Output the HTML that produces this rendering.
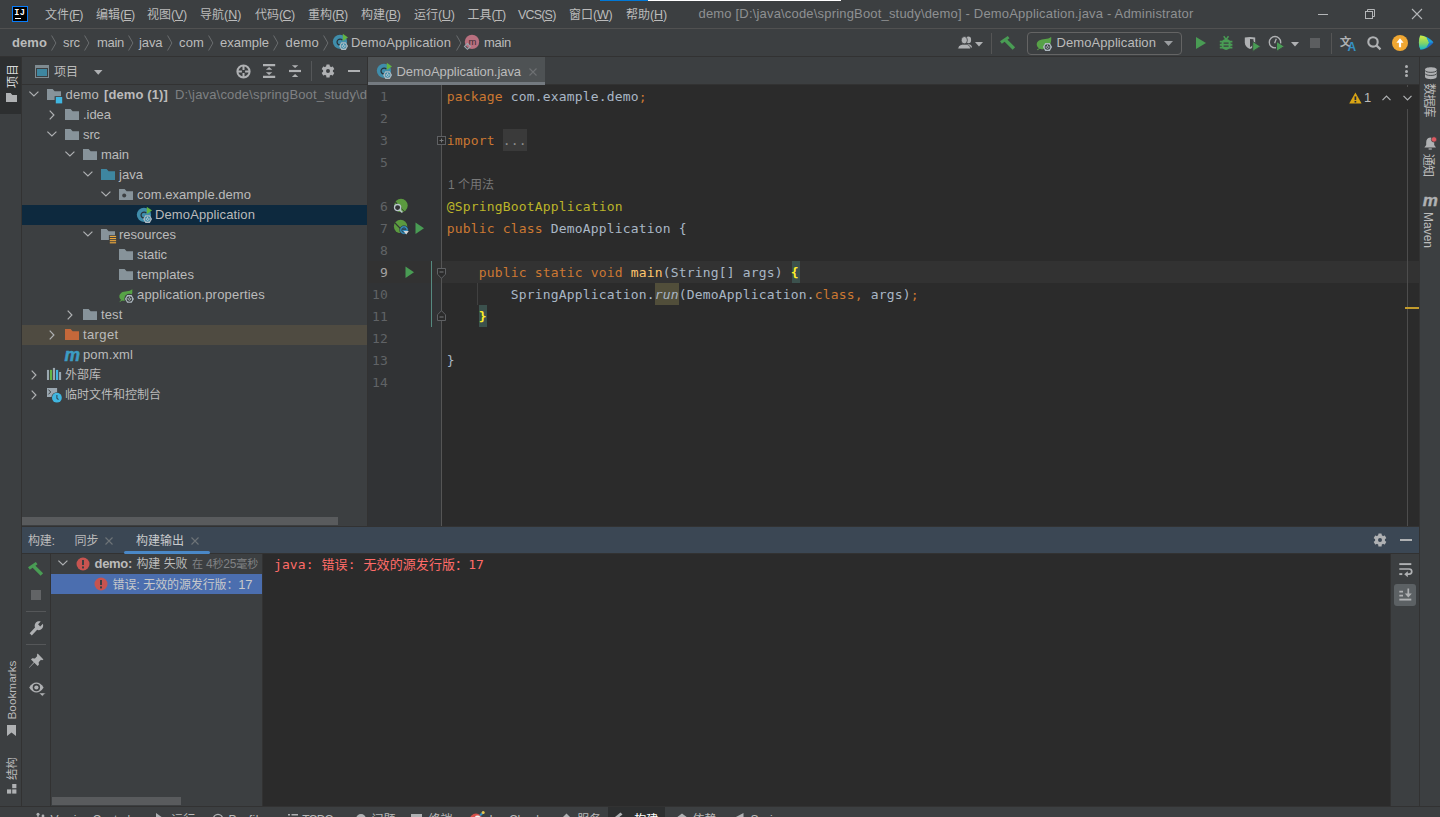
<!DOCTYPE html>
<html lang="zh-CN">
<head>
<meta charset="utf-8">
<title>demo - DemoApplication.java</title>
<style>
html,body{margin:0;padding:0;background:#3c3f41;overflow:hidden}
body{width:1440px;height:817px;position:relative;font-family:"Liberation Sans","Noto Sans CJK SC",sans-serif;font-size:13px;color:#bbbbbb}
.b{position:absolute}
.t{position:absolute;white-space:pre;line-height:20px;height:20px}
.c{font-size:12px}
.c11{font-size:11px}
.m{font-family:"DejaVu Sans Mono","Liberation Mono","Noto Sans CJK SC",monospace;font-size:13px}
.m .c{font-size:13px}
svg{position:absolute;overflow:visible}
u{text-decoration:underline;text-underline-offset:1px}
</style>
</head>
<body>
<div class="b" style="left:600px;top:0px;width:48px;height:1px;background:#0078d7;"></div>
<div class="b" style="left:648px;top:0px;width:193px;height:1px;background:#ffffff;"></div>
<div class="b" style="left:0px;top:28px;width:1440px;height:1px;background:#515151;"></div>
<div class="b" style="left:12px;top:6px;width:14px;height:14px;background:#000;border:1px solid #087cfa"></div>
<span class="t" style="left:14.3px;top:8.7px;font-size:8.6px;line-height:9px;height:9px;font-weight:700;color:#fff;letter-spacing:0.2px;font-family:'Liberation Mono',monospace">IJ</span>
<div class="b" style="left:15px;top:17.8px;width:6px;height:1.3px;background:#fff;"></div>
<span class="t" style="left:45px;top:5.4px;font-size:12.5px;letter-spacing:-0.833px;"><span class="c" style="letter-spacing:0">文件</span>(<u>F</u>)</span>
<span class="t" style="left:96px;top:5.4px;font-size:12.5px;letter-spacing:-0.734px;"><span class="c" style="letter-spacing:0">编辑</span>(<u>E</u>)</span>
<span class="t" style="left:147px;top:5.4px;font-size:12.5px;letter-spacing:-0.234px;"><span class="c" style="letter-spacing:0">视图</span>(<u>V</u>)</span>
<span class="t" style="left:200px;top:5.4px;font-size:12.5px;letter-spacing:0.036px;"><span class="c" style="letter-spacing:0">导航</span>(<u>N</u>)</span>
<span class="t" style="left:255px;top:5.4px;font-size:12.5px;letter-spacing:-0.630px;"><span class="c" style="letter-spacing:0">代码</span>(<u>C</u>)</span>
<span class="t" style="left:308px;top:5.4px;font-size:12.5px;letter-spacing:-0.630px;"><span class="c" style="letter-spacing:0">重构</span>(<u>R</u>)</span>
<span class="t" style="left:361px;top:5.4px;font-size:12.5px;letter-spacing:-0.401px;"><span class="c" style="letter-spacing:0">构建</span>(<u>B</u>)</span>
<span class="t" style="left:414px;top:5.4px;font-size:12.5px;letter-spacing:-0.297px;"><span class="c" style="letter-spacing:0">运行</span>(<u>U</u>)</span>
<span class="t" style="left:467.5px;top:5.4px;font-size:12.5px;letter-spacing:-0.667px;"><span class="c" style="letter-spacing:0">工具</span>(<u>T</u>)</span>
<span class="t" style="left:518px;top:5.4px;font-size:12.5px;letter-spacing:-0.815px;">VCS(<u>S</u>)</span>
<span class="t" style="left:569px;top:5.4px;font-size:12.5px;letter-spacing:-0.224px;"><span class="c" style="letter-spacing:0">窗口</span>(<u>W</u>)</span>
<span class="t" style="left:626px;top:5.4px;font-size:12.5px;letter-spacing:-0.130px;"><span class="c" style="letter-spacing:0">帮助</span>(<u>H</u>)</span>
<span class="t" style="left:698.5px;top:4px;color:#8e9092;letter-spacing:0.181px;">demo [D:\java\code\springBoot_study\demo] - DemoApplication.java - Administrator</span>
<div class="b" style="left:1318px;top:14px;width:10px;height:1px;background:#b4b6b8;"></div>
<div class="b" style="left:1365px;top:11px;width:6px;height:6px;border:1px solid #b4b6b8"></div>
<svg style="left:1365px;top:9px;" width="11" height="11" viewBox="0 0 11 11"><path d="M2.5 2 V0.5 H9.5 V7.5 H8" fill="none" stroke="#b4b6b8" stroke-width="1"/></svg>
<svg style="left:1412px;top:9px;" width="10" height="10" viewBox="0 0 10 10"><path d="M0 0 L10 10 M10 0 L0 10" stroke="#b4b6b8" stroke-width="1.1"/></svg>
<div class="b" style="left:0px;top:56px;width:1440px;height:1px;background:#323232;"></div>
<span class="t" style="left:12px;top:32.7px;font-weight:700;letter-spacing:0.082px;">demo</span>
<span class="t" style="left:63px;top:32.7px;font-weight:400;letter-spacing:-0.115px;">src</span>
<span class="t" style="left:97px;top:32.7px;font-weight:400;letter-spacing:-0.297px;">main</span>
<span class="t" style="left:139px;top:32.7px;font-weight:400;letter-spacing:-0.090px;">java</span>
<span class="t" style="left:179px;top:32.7px;font-weight:400;letter-spacing:0.146px;">com</span>
<span class="t" style="left:220px;top:32.7px;font-weight:400;letter-spacing:-0.020px;">example</span>
<span class="t" style="left:285.5px;top:32.7px;font-weight:400;letter-spacing:0.242px;">demo</span>
<svg style="left:51.0px;top:34.5px;" width="6" height="16" viewBox="0 0 6 16"><path d="M0.6 0.5 L4.9 8 L0.6 15.5" fill="none" stroke="#6a6d6f" stroke-width="1"/></svg>
<svg style="left:84.2px;top:34.5px;" width="6" height="16" viewBox="0 0 6 16"><path d="M0.6 0.5 L4.9 8 L0.6 15.5" fill="none" stroke="#6a6d6f" stroke-width="1"/></svg>
<svg style="left:128.4px;top:34.5px;" width="6" height="16" viewBox="0 0 6 16"><path d="M0.6 0.5 L4.9 8 L0.6 15.5" fill="none" stroke="#6a6d6f" stroke-width="1"/></svg>
<svg style="left:167.20000000000002px;top:34.5px;" width="6" height="16" viewBox="0 0 6 16"><path d="M0.6 0.5 L4.9 8 L0.6 15.5" fill="none" stroke="#6a6d6f" stroke-width="1"/></svg>
<svg style="left:208.20000000000002px;top:34.5px;" width="6" height="16" viewBox="0 0 6 16"><path d="M0.6 0.5 L4.9 8 L0.6 15.5" fill="none" stroke="#6a6d6f" stroke-width="1"/></svg>
<svg style="left:273.2px;top:34.5px;" width="6" height="16" viewBox="0 0 6 16"><path d="M0.6 0.5 L4.9 8 L0.6 15.5" fill="none" stroke="#6a6d6f" stroke-width="1"/></svg>
<svg style="left:323.3px;top:34.5px;" width="6" height="16" viewBox="0 0 6 16"><path d="M0.6 0.5 L4.9 8 L0.6 15.5" fill="none" stroke="#6a6d6f" stroke-width="1"/></svg>
<svg style="left:455.6px;top:34.5px;" width="6" height="16" viewBox="0 0 6 16"><path d="M0.6 0.5 L4.9 8 L0.6 15.5" fill="none" stroke="#6a6d6f" stroke-width="1"/></svg>
<svg style="left:332px;top:34px;" width="17" height="17" viewBox="0 0 17 17"><circle cx="7.95" cy="7.8" r="7.15" fill="#3f8dab"/><path d="M10.4 6.1 A3.05 3.05 0 1 0 10.4 10.1" fill="none" stroke="#27333a" stroke-width="1.25"/><polygon points="10.8,-0.2 16,3.5 10.8,6.9" fill="#62b543"/><polygon points="16.05,12.10 13.82,15.95 9.38,15.95 7.15,12.10 9.37,8.25 13.82,8.25" fill="#aeb9c0"/><circle cx="11.6" cy="12.1" r="2.75" fill="#3f8dab"/><path d="M10.35 11.2 A1.45 1.45 0 1 0 12.85 11.2" fill="none" stroke="#c9d2d8" stroke-width="0.95"/><path d="M11.6 9.6 V11.6" stroke="#c9d2d8" stroke-width="0.9"/></svg>
<span class="t" style="left:351px;top:32.7px;letter-spacing:0.115px;">DemoApplication</span>
<svg style="left:464px;top:34px;" width="16" height="16" viewBox="0 0 16 16"><circle cx="8" cy="7.85" r="7.2" fill="#b9707f"/><text x="8.5" y="10.8" font-size="9.5" text-anchor="middle" fill="#3a2a30" font-family="Liberation Sans,sans-serif">m</text><path d="M3.45 9.5 L6.4 12.4 L3.45 15.3 L0.5 12.4 Z" fill="none" stroke="#9aa7b0" stroke-width="1.1"/></svg>
<span class="t" style="left:484px;top:32.7px;letter-spacing:-0.297px;">main</span>
<svg style="left:957px;top:36px;" width="16" height="14" viewBox="0 0 16 14"><g fill="#afb1b3"><ellipse cx="11.4" cy="3.9" rx="2.7" ry="3.3"/><path d="M9 8 C12 7.6 14.6 8.6 15 11 L15 11.6 L9 11.6 Z"/></g><g fill="#afb1b3" stroke="#3c3f41" stroke-width="0.8"><ellipse cx="7.3" cy="4.2" rx="3.1" ry="3.7"/><path d="M0.8 12.9 C0.8 10 3 8.6 5.6 8.2 L9 8.2 C11.6 8.6 13.6 10 13.6 12.9 Z"/></g></svg>
<svg style="left:975.0px;top:41.75px;" width="8" height="4.5" viewBox="0 0 8 4.5"><polygon points="0,0 8,0 4.0,4.5" fill="#afb1b3"/></svg>
<div class="b" style="left:991px;top:33px;width:1px;height:21px;background:#555555;"></div>
<svg style="left:1000px;top:35px;" width="16" height="16" viewBox="0 0 16 16"><g fill="#499c54"><polygon points="0,6.3 7.8,0.9 9.5,3.3 1.8,8.7"/><polygon points="4.1,6.2 6.5,3.8 15.1,12.3 12.6,14.8"/></g></svg>
<div class="b" style="left:1027px;top:32px;width:153px;height:21px;border:1px solid #646464;border-radius:4px"></div>
<svg style="left:1034px;top:35px;" width="18" height="18" viewBox="0 0 18 18"><g transform="translate(1.5,0.5)"><path d="M15.7 1.6 C16.1 5.5 15.1 10 12.1 12.3 C9.1 14.3 4.7 14.1 2.5 11.9 C0.5 9.7 0.9 6.7 3.5 5.1 C7 3.3 12.3 4.3 15.7 1.6 Z" fill="#57a247"/><path d="M1.7 14.3 C3.5 13.5 5 12.5 6.5 11" fill="none" stroke="#57a247" stroke-width="1"/></g><polygon points="18.10,12.10 15.80,16.08 11.20,16.08 8.90,12.10 11.20,8.12 15.80,8.12" fill="#aeb9c0"/><circle cx="13.5" cy="12.1" r="2.75" fill="#3c3f41"/><path d="M12.25 11.2 A1.45 1.45 0 1 0 14.75 11.2" fill="none" stroke="#aeb9c0" stroke-width="0.95"/><path d="M13.5 9.6 V11.6" stroke="#aeb9c0" stroke-width="0.9"/></svg>
<span class="t" style="left:1056.5px;top:33.4px;letter-spacing:0.081px;">DemoApplication</span>
<svg style="left:1163.5px;top:40.5px;" width="9" height="5" viewBox="0 0 9 5"><polygon points="0,0 9,0 4.5,5" fill="#9a9da0"/></svg>
<svg style="left:1195px;top:36px;" width="12" height="14" viewBox="0 0 12 14"><polygon points="1,1 1,13 11,7" fill="#499c54"/></svg>
<svg style="left:1219px;top:35px;" width="16" height="16" viewBox="0 0 16 16"><g fill="none" stroke="#499c54"><path d="M4.7 1.3 L7 4.4 M9.5 1.3 L7.2 4.4" stroke-width="1.5"/><path d="M0.8 6.6 H13.4 M0.8 9.7 H13.4 M0.8 12.6 H13.4" stroke-width="1.9"/></g><path d="M2.6 8.2 C2.6 2.6 11.6 2.6 11.6 8.2 V10.6 C11.6 16.4 2.6 16.4 2.6 10.6 Z" fill="#499c54"/><path d="M4.6 8.1 H9.6 M4.6 11.2 H9.6" stroke="#3c3f41" stroke-width="1.2"/></svg>
<svg style="left:1244px;top:35px;" width="17" height="17" viewBox="0 0 17 17"><path d="M0.8 2.6 L6 2.1 L11.2 2.6 V7.6 C11.2 10.9 8.9 13.1 6 14.1 C3.1 13.1 0.8 10.9 0.8 7.6 Z" fill="#afb1b3"/><path d="M6 3.9 L9.5 4.2 V7.6 C9.5 9.7 8.1 11.3 6 12.3 Z" fill="#3c3f41"/><polygon points="8.7,6.4 8.7,16.4 16.6,11.4" fill="#499c54" stroke="#3c3f41" stroke-width="0.9"/></svg>
<svg style="left:1268px;top:35px;" width="17" height="17" viewBox="0 0 17 17"><circle cx="7" cy="7.2" r="5.7" fill="none" stroke="#afb1b3" stroke-width="1.4"/><path d="M8.3 3.8 L6.6 8.2" stroke="#afb1b3" stroke-width="1.3"/><polygon points="8.5,6.4 8.5,16.4 16.4,11.4" fill="#499c54" stroke="#3c3f41" stroke-width="1"/></svg>
<svg style="left:1291.0px;top:41.75px;" width="8" height="4.5" viewBox="0 0 8 4.5"><polygon points="0,0 8,0 4.0,4.5" fill="#afb1b3"/></svg>
<div class="b" style="left:1310px;top:38px;width:10px;height:10px;background:#5c5e60;"></div>
<div class="b" style="left:1331px;top:33px;width:1px;height:21px;background:#555555;"></div>
<span class="t" style="left:1339.7px;top:31.4px;font-size:11.5px;font-weight:700;color:#afb1b3;font-family:'Noto Sans CJK SC',sans-serif">文</span>
<span class="t" style="left:1347.6px;top:37.4px;font-size:12px;font-weight:700;color:#3592c4">A</span>
<svg style="left:1367px;top:35px;" width="16" height="16" viewBox="0 0 16 16"><circle cx="6" cy="6.9" r="4.7" fill="none" stroke="#afb1b3" stroke-width="2.1"/><path d="M9.4 10.4 L13.5 14.4" stroke="#afb1b3" stroke-width="2.2"/></svg>
<svg style="left:1392px;top:35px;" width="16" height="16" viewBox="0 0 16 16"><circle cx="8" cy="8" r="8" fill="#f0a732"/><polygon points="8,3.3 11.6,7.8 9.1,7.8 9.1,12.2 6.9,12.2 6.9,7.8 4.4,7.8" fill="#fff"/></svg>
<svg style="left:1418px;top:35px;" width="16" height="16" viewBox="0 0 16 16"><defs><linearGradient id="cg1" x1="0" y1="0" x2="0" y2="1"><stop offset="0" stop-color="#d6ea3e"/><stop offset="0.55" stop-color="#7fd36a"/><stop offset="1" stop-color="#10b7c9"/></linearGradient><linearGradient id="cg2" x1="0" y1="0" x2="1" y2="1"><stop offset="0" stop-color="#27b08a"/><stop offset="0.5" stop-color="#1b8fd0"/><stop offset="1" stop-color="#2142c4"/></linearGradient></defs><path d="M2.2 0.6 C6 0.2 12.5 3.4 15.4 7.4 C12.6 11.6 6.2 14.8 2.4 14.6 C0.4 10.5 0.4 4.8 2.2 0.6 Z" fill="url(#cg2)"/><path d="M2.2 0.6 C4.2 0.6 6.6 1.4 8.6 2.6 L11 7.6 L8.4 12.6 C6.4 13.8 4 14.7 2.4 14.6 C0.4 10.5 0.4 4.8 2.2 0.6 Z" fill="url(#cg1)"/><path d="M8.6 2.6 C11.2 4 13.8 5.6 15.4 7.4 L11 7.6 Z" fill="#1c9ed6"/></svg>
<div class="b" style="left:21px;top:57px;width:1px;height:750px;background:#323232;"></div>
<div class="b" style="left:0px;top:57px;width:21px;height:57px;background:#2d2f30;"></div>
<span class="t" style="left:2.8px;top:67.6px;width:20px;text-align:center;transform:rotate(-90deg);transform-origin:50% 50%;color:#d6d8da"><span class="c">项目</span></span>
<svg style="left:5px;top:91px;" width="16" height="16" viewBox="0 0 16 16"><path d="M1 11 V2 H5.6 L7.4 4 H12 V11 Z" fill="#afb1b3"/></svg>
<span class="t" style="left:-18px;top:680.2px;width:60px;text-align:center;transform:rotate(-90deg);transform-origin:50% 50%;font-size:11.8px;letter-spacing:0px">Bookmarks</span>
<svg style="left:7px;top:725px;" width="10" height="12" viewBox="0 0 10 12"><path d="M0 0 H9 V11 L4.5 7.4 L0 11 Z" fill="#afb1b3"/></svg>
<span class="t" style="left:2px;top:759.8px;width:20px;text-align:center;transform:rotate(-90deg);transform-origin:50% 50%"><span class="c" style="font-size:11.5px;letter-spacing:-0.3px">结构</span></span>
<svg style="left:7px;top:784px;" width="10" height="10" viewBox="0 0 10 10"><g fill="#afb1b3"><rect x="5.2" y="0" width="4.2" height="4.2"/><rect x="0" y="5.4" width="4.2" height="4.2"/><rect x="5.2" y="5.4" width="4.2" height="4.2"/></g></svg>
<div class="b" style="left:22px;top:84px;width:345px;height:1px;background:#323232;"></div>
<div class="b" style="left:35px;top:65px;width:12px;height:9px;border:1px solid #7f8b91;border-top-width:3px;box-sizing:content-box;background:#3c3f41"></div>
<div class="b" style="left:37px;top:69px;width:10px;height:7px;background:#3e86a0;"></div>
<svg style="left:93.75px;top:70.1px;" width="8.5" height="4.8" viewBox="0 0 8.5 4.8"><polygon points="0,0 8.5,0 4.25,4.8" fill="#afb1b3"/></svg>
<svg style="left:235.6px;top:63.9px;" width="15" height="15" viewBox="0 0 15 15"><circle cx="7.5" cy="7.5" r="6.1" fill="none" stroke="#afb1b3" stroke-width="2"/><path d="M7.5 1.5 V5.9 M7.5 9.1 V13.5 M1.5 7.5 H5.9 M9.1 7.5 H13.5" stroke="#afb1b3" stroke-width="2"/></svg>
<svg style="left:263px;top:64px;" width="12.2" height="14" viewBox="0 0 12.2 14"><path d="M0 1.1 H12.2 M0 12.9 H12.2" stroke="#afb1b3" stroke-width="2.2"/><polygon points="2.9,5.8 9.3,5.8 6.1,3" fill="#afb1b3"/><polygon points="2.9,8.2 9.3,8.2 6.1,11" fill="#afb1b3"/></svg>
<svg style="left:289px;top:64px;" width="12" height="14" viewBox="0 0 12 14"><path d="M0 7 H12" stroke="#afb1b3" stroke-width="2.2"/><polygon points="2.9,1.3 9.3,1.3 6.1,4.1" fill="#afb1b3"/><polygon points="2.9,12.9 9.3,12.9 6.1,10.1" fill="#afb1b3"/></svg>
<div class="b" style="left:311px;top:61px;width:1px;height:20px;background:#555759;"></div>
<svg style="left:321px;top:64px;" width="14" height="14" viewBox="0 0 14 14"><g transform="translate(7,7)"><circle r="3.5" fill="none" stroke="#afb1b3" stroke-width="3"/><rect x="-1.7" y="-6.4" width="3.4" height="3.2" rx="0.5" transform="rotate(0)" fill="#afb1b3"/><rect x="-1.7" y="-6.4" width="3.4" height="3.2" rx="0.5" transform="rotate(60)" fill="#afb1b3"/><rect x="-1.7" y="-6.4" width="3.4" height="3.2" rx="0.5" transform="rotate(120)" fill="#afb1b3"/><rect x="-1.7" y="-6.4" width="3.4" height="3.2" rx="0.5" transform="rotate(180)" fill="#afb1b3"/><rect x="-1.7" y="-6.4" width="3.4" height="3.2" rx="0.5" transform="rotate(240)" fill="#afb1b3"/><rect x="-1.7" y="-6.4" width="3.4" height="3.2" rx="0.5" transform="rotate(300)" fill="#afb1b3"/></g></svg>
<div class="b" style="left:348px;top:70px;width:12px;height:2px;background:#afb1b3;"></div>
<span class="t" style="left:54px;top:61.7px;letter-spacing:-0.008px;"><span class="c">项目</span></span>
<div class="b" style="left:22px;top:205px;width:345px;height:20px;background:#0d293e;"></div>
<div class="b" style="left:22px;top:325px;width:345px;height:20px;background:#4f4b41;"></div>
<svg style="left:28.5px;top:91.4px;" width="10" height="6" viewBox="0 0 10 6"><path d="M0.4 0.6 L4.9 4.9 L9.4 0.6" fill="none" stroke="#afb1b3" stroke-width="1.2"/></svg>
<svg style="left:46px;top:87px;" width="16" height="16" viewBox="0 0 16 16"><path d="M1 13 V2 H6.6 L8.6 4.2 H15 V13 Z" fill="#87939a"/><rect x="8.6" y="9.2" width="8" height="8" fill="#3c3f41"/><rect x="9.8" y="10" width="6.4" height="6.4" fill="#40b6e0"/></svg>
<span class="t" style="left:65.5px;top:84.8px;letter-spacing:0.242px;">demo</span>
<span class="t" style="left:104px;top:84.8px;font-weight:700;letter-spacing:0.116px;">[demo (1)]</span>
<div class="b" style="left:175px;top:85px;width:192px;height:20px;overflow:hidden">
<span class="t" style="left:0px;top:-0.1999999999999993px;color:#7f8183;letter-spacing:0.163px;">D:\java\code\springBoot_study\demo</span>
</div>
<svg style="left:48.6px;top:109.9px;" width="6" height="10" viewBox="0 0 6 10"><path d="M0.7 0.6 L4.9 5 L0.7 9.4" fill="none" stroke="#afb1b3" stroke-width="1.2"/></svg>
<svg style="left:64px;top:107px;" width="16" height="16" viewBox="0 0 16 16"><path d="M1 13 V2 H6.6 L8.6 4.2 H15 V13 Z" fill="#87939a"/></svg>
<span class="t" style="left:83px;top:104.8px;letter-spacing:-0.041px;">.idea</span>
<svg style="left:46.5px;top:131.4px;" width="10" height="6" viewBox="0 0 10 6"><path d="M0.4 0.6 L4.9 4.9 L9.4 0.6" fill="none" stroke="#afb1b3" stroke-width="1.2"/></svg>
<svg style="left:64px;top:127px;" width="16" height="16" viewBox="0 0 16 16"><path d="M1 13 V2 H6.6 L8.6 4.2 H15 V13 Z" fill="#87939a"/></svg>
<span class="t" style="left:83px;top:124.80000000000001px;letter-spacing:-0.115px;">src</span>
<svg style="left:64.5px;top:151.4px;" width="10" height="6" viewBox="0 0 10 6"><path d="M0.4 0.6 L4.9 4.9 L9.4 0.6" fill="none" stroke="#afb1b3" stroke-width="1.2"/></svg>
<svg style="left:82px;top:147px;" width="16" height="16" viewBox="0 0 16 16"><path d="M1 13 V2 H6.6 L8.6 4.2 H15 V13 Z" fill="#87939a"/></svg>
<span class="t" style="left:101px;top:144.8px;letter-spacing:-0.047px;">main</span>
<svg style="left:82.5px;top:171.4px;" width="10" height="6" viewBox="0 0 10 6"><path d="M0.4 0.6 L4.9 4.9 L9.4 0.6" fill="none" stroke="#afb1b3" stroke-width="1.2"/></svg>
<svg style="left:100px;top:167px;" width="16" height="16" viewBox="0 0 16 16"><path d="M1 13 V2 H6.6 L8.6 4.2 H15 V13 Z" fill="#3e86a0"/></svg>
<span class="t" style="left:119px;top:164.8px;letter-spacing:0.035px;">java</span>
<svg style="left:100.5px;top:191.4px;" width="10" height="6" viewBox="0 0 10 6"><path d="M0.4 0.6 L4.9 4.9 L9.4 0.6" fill="none" stroke="#afb1b3" stroke-width="1.2"/></svg>
<svg style="left:118px;top:187px;" width="16" height="16" viewBox="0 0 16 16"><path d="M1 13 V2 H6.6 L8.6 4.2 H15 V13 Z" fill="#87939a"/><circle cx="6.2" cy="8.4" r="2" fill="#3c3f41"/></svg>
<span class="t" style="left:137px;top:184.8px;letter-spacing:0.034px;">com.example.demo</span>
<svg style="left:136px;top:207px;" width="17" height="17" viewBox="0 0 17 17"><circle cx="7.95" cy="7.8" r="7.15" fill="#3f8dab"/><path d="M10.4 6.1 A3.05 3.05 0 1 0 10.4 10.1" fill="none" stroke="#27333a" stroke-width="1.25"/><polygon points="10.8,-0.2 16,3.5 10.8,6.9" fill="#62b543"/><polygon points="16.05,12.10 13.82,15.95 9.38,15.95 7.15,12.10 9.37,8.25 13.82,8.25" fill="#aeb9c0"/><circle cx="11.6" cy="12.1" r="2.75" fill="#3f8dab"/><path d="M10.35 11.2 A1.45 1.45 0 1 0 12.85 11.2" fill="none" stroke="#c9d2d8" stroke-width="0.95"/><path d="M11.6 9.6 V11.6" stroke="#c9d2d8" stroke-width="0.9"/></svg>
<span class="t" style="left:155px;top:204.8px;letter-spacing:0.115px;">DemoApplication</span>
<svg style="left:82.5px;top:231.4px;" width="10" height="6" viewBox="0 0 10 6"><path d="M0.4 0.6 L4.9 4.9 L9.4 0.6" fill="none" stroke="#afb1b3" stroke-width="1.2"/></svg>
<svg style="left:100px;top:227px;" width="17" height="17" viewBox="0 0 17 17"><path d="M1 13 V2 H6.6 L8.6 4.2 H15 V13 Z" fill="#87939a"/><rect x="8.9" y="8.2" width="8" height="9" fill="#3c3f41"/><g fill="#eaa63c"><rect x="9.8" y="8.9" width="6.3" height="1.15"/><rect x="9.8" y="11" width="6.3" height="1.15"/><rect x="9.8" y="13.1" width="6.3" height="1.15"/><rect x="9.8" y="15.2" width="6.3" height="1.15"/></g></svg>
<span class="t" style="left:119px;top:224.8px;letter-spacing:-0.009px;">resources</span>
<svg style="left:118px;top:247px;" width="16" height="16" viewBox="0 0 16 16"><path d="M1 13 V2 H6.6 L8.6 4.2 H15 V13 Z" fill="#87939a"/></svg>
<span class="t" style="left:137px;top:244.8px;letter-spacing:-0.057px;">static</span>
<svg style="left:118px;top:267px;" width="16" height="16" viewBox="0 0 16 16"><path d="M1 13 V2 H6.6 L8.6 4.2 H15 V13 Z" fill="#87939a"/></svg>
<span class="t" style="left:137px;top:264.8px;letter-spacing:0.069px;">templates</span>
<svg style="left:118px;top:287px;" width="18" height="18" viewBox="0 0 18 18"><g transform="translate(0.2,0.7) scale(0.9,0.97)"><g transform="translate(0,0)"><path d="M15.7 1.6 C16.1 5.5 15.1 10 12.1 12.3 C9.1 14.3 4.7 14.1 2.5 11.9 C0.5 9.7 0.9 6.7 3.5 5.1 C7 3.3 12.3 4.3 15.7 1.6 Z" fill="#57a247"/><path d="M1.7 14.3 C3.5 13.5 5 12.5 6.5 11" fill="none" stroke="#57a247" stroke-width="1"/></g></g><circle cx="11.4" cy="11.9" r="5.1" fill="#3c3f41"/><polygon points="15.90,11.90 13.65,15.80 9.15,15.80 6.90,11.90 9.15,8.00 13.65,8.00" fill="#aeb9c0"/><circle cx="11.4" cy="11.9" r="2.75" fill="#3c3f41"/><path d="M10.15 11.0 A1.45 1.45 0 1 0 12.65 11.0" fill="none" stroke="#aeb9c0" stroke-width="0.95"/><path d="M11.4 9.4 V11.4" stroke="#aeb9c0" stroke-width="0.9"/></svg>
<span class="t" style="left:137px;top:284.8px;letter-spacing:0.201px;">application.properties</span>
<svg style="left:66.6px;top:309.9px;" width="6" height="10" viewBox="0 0 6 10"><path d="M0.7 0.6 L4.9 5 L0.7 9.4" fill="none" stroke="#afb1b3" stroke-width="1.2"/></svg>
<svg style="left:82px;top:307px;" width="16" height="16" viewBox="0 0 16 16"><path d="M1 13 V2 H6.6 L8.6 4.2 H15 V13 Z" fill="#87939a"/></svg>
<span class="t" style="left:101px;top:304.8px;letter-spacing:0.133px;">test</span>
<svg style="left:48.6px;top:329.9px;" width="6" height="10" viewBox="0 0 6 10"><path d="M0.7 0.6 L4.9 5 L0.7 9.4" fill="none" stroke="#afb1b3" stroke-width="1.2"/></svg>
<svg style="left:64px;top:327px;" width="16" height="16" viewBox="0 0 16 16"><path d="M1 13 V2 H6.6 L8.6 4.2 H15 V13 Z" fill="#c4683a"/></svg>
<span class="t" style="left:83px;top:324.8px;letter-spacing:0.375px;">target</span>
<span class="t" style="left:64.6px;top:344.6px;font-size:17.5px;font-weight:700;font-style:italic;color:#3c9cc4;-webkit-text-stroke:0.5px #3c9cc4">m</span>
<span class="t" style="left:83px;top:344.8px;letter-spacing:0.125px;">pom.xml</span>
<svg style="left:30.6px;top:369.9px;" width="6" height="10" viewBox="0 0 6 10"><path d="M0.7 0.6 L4.9 5 L0.7 9.4" fill="none" stroke="#afb1b3" stroke-width="1.2"/></svg>
<svg style="left:46px;top:367px;" width="16" height="16" viewBox="0 0 16 16"><g fill="#9aa7b0"><rect x="0.95" y="2.9" width="2.05" height="10.1"/><rect x="6.9" y="0.9" width="2.15" height="12.1"/><rect x="13.05" y="5" width="2.05" height="8"/></g><rect x="3.9" y="2.9" width="2.2" height="10.1" fill="#62b543"/><rect x="9.95" y="2.9" width="2.25" height="10.1" fill="#40b6e0"/></svg>
<span class="t" style="left:65px;top:364.8px;letter-spacing:-0.005px;"><span class="c">外部库</span></span>
<svg style="left:30.6px;top:389.9px;" width="6" height="10" viewBox="0 0 6 10"><path d="M0.7 0.6 L4.9 5 L0.7 9.4" fill="none" stroke="#afb1b3" stroke-width="1.2"/></svg>
<svg style="left:46px;top:387px;" width="18" height="18" viewBox="0 0 18 18"><rect x="1" y="1" width="10.1" height="9" fill="#9aa7b0"/><path d="M2.4 2.6 L4.7 5 L2.4 7.4" fill="none" stroke="#3c3f41" stroke-width="1"/><circle cx="10.9" cy="10.7" r="5.5" fill="#3c3f41"/><circle cx="10.9" cy="10.7" r="4.9" fill="#40b6e0"/><path d="M10.9 8 V11.2 L12.5 12.6" fill="none" stroke="#2f4a58" stroke-width="1.1"/></svg>
<span class="t" style="left:65px;top:384.8px;letter-spacing:-0.002px;"><span class="c">临时文件和控制台</span></span>
<div class="b" style="left:22px;top:517px;width:316px;height:8px;background:#595b5d;"></div>
<div class="b" style="left:367px;top:57px;width:1px;height:470px;background:#323232;"></div>
<div class="b" style="left:368px;top:84px;width:1051px;height:1px;background:#323232;"></div>
<div class="b" style="left:368px;top:57px;width:177px;height:28px;background:#4e5254;"></div>
<div class="b" style="left:368px;top:82px;width:177px;height:3px;background:#747a80;"></div>
<svg style="left:376.1px;top:62.9px;" width="17" height="17" viewBox="0 0 17 17"><circle cx="7.95" cy="7.8" r="7.15" fill="#3f8dab"/><path d="M10.4 6.1 A3.05 3.05 0 1 0 10.4 10.1" fill="none" stroke="#27333a" stroke-width="1.25"/><polygon points="10.8,-0.2 16,3.5 10.8,6.9" fill="#62b543"/><polygon points="16.05,12.10 13.82,15.95 9.38,15.95 7.15,12.10 9.37,8.25 13.82,8.25" fill="#aeb9c0"/><circle cx="11.6" cy="12.1" r="2.75" fill="#3f8dab"/><path d="M10.35 11.2 A1.45 1.45 0 1 0 12.85 11.2" fill="none" stroke="#c9d2d8" stroke-width="0.95"/><path d="M11.6 9.6 V11.6" stroke="#c9d2d8" stroke-width="0.9"/></svg>
<span class="t" style="left:396.5px;top:62px;letter-spacing:-0.062px;">DemoApplication.java</span>
<svg style="left:529.2px;top:67.5px;" width="8" height="8" viewBox="0 0 8 8"><path d="M0.5 0.5 L7.5 7.5 M7.5 0.5 L0.5 7.5" stroke="#6e7173" stroke-width="1.1"/></svg>
<div class="b" style="left:1405.4px;top:65.0px;width:3px;height:3px;border-radius:50%;background:#afb1b3"></div>
<div class="b" style="left:1405.4px;top:69.5px;width:3px;height:3px;border-radius:50%;background:#afb1b3"></div>
<div class="b" style="left:1405.4px;top:74.0px;width:3px;height:3px;border-radius:50%;background:#afb1b3"></div>
<div class="b" style="left:368px;top:85px;width:1051px;height:442px;background:#2b2b2b;"></div>
<div class="b" style="left:368px;top:85px;width:73px;height:442px;background:#313335;"></div>
<div class="b" style="left:441px;top:85px;width:1px;height:442px;background:#555555;"></div>
<div class="b" style="left:368px;top:261px;width:73px;height:22px;background:#323232;"></div>
<div class="b" style="left:442px;top:261px;width:977px;height:22px;background:#323232;"></div>
<span class="t m" style="left:380px;top:86.5px;color:#606366;letter-spacing:0.172px;">1</span>
<span class="t m" style="left:380px;top:108.5px;color:#606366;letter-spacing:0.172px;">2</span>
<span class="t m" style="left:380px;top:130.5px;color:#606366;letter-spacing:0.172px;">3</span>
<span class="t m" style="left:380px;top:152.5px;color:#606366;letter-spacing:0.172px;">5</span>
<span class="t m" style="left:380px;top:196.5px;color:#606366;letter-spacing:0.172px;">6</span>
<span class="t m" style="left:380px;top:218.5px;color:#606366;letter-spacing:0.172px;">7</span>
<span class="t m" style="left:380px;top:240.5px;color:#606366;letter-spacing:0.172px;">8</span>
<span class="t m" style="left:380px;top:262.5px;color:#a4a3a3;letter-spacing:0.172px;">9</span>
<span class="t m" style="left:372px;top:284.5px;color:#606366;letter-spacing:0.172px;">10</span>
<span class="t m" style="left:372px;top:306.5px;color:#606366;letter-spacing:0.172px;">11</span>
<span class="t m" style="left:372px;top:328.5px;color:#606366;letter-spacing:0.172px;">12</span>
<span class="t m" style="left:372px;top:350.5px;color:#606366;letter-spacing:0.172px;">13</span>
<span class="t m" style="left:372px;top:372.5px;color:#606366;letter-spacing:0.172px;">14</span>
<span class="t m" style="left:446.8px;top:87px;color:#a9b7c6;letter-spacing:0.172px;"><span style="color:#cc7832">package</span> com.example.demo<span style="color:#cc7832">;</span></span>
<div class="b" style="left:503px;top:129px;width:24px;height:22px;background:#3a3a3a;"></div>
<span class="t m" style="left:446.8px;top:131px;color:#a9b7c6;letter-spacing:0.172px;"><span style="color:#cc7832">import</span> <span style="color:#8c8c8c">...</span></span>
<span class="t" style="left:448px;top:174.5px;color:#787878;font-size:12px;letter-spacing:-0.006px;">1 <span class="c">个用法</span></span>
<span class="t m" style="left:446.8px;top:197px;color:#a9b7c6;letter-spacing:0.173px;"><span style="color:#bbb529">@SpringBootApplication</span></span>
<span class="t m" style="left:446.8px;top:219px;color:#a9b7c6;letter-spacing:0.173px;"><span style="color:#cc7832">public class</span> DemoApplication {</span>
<div class="b" style="left:479px;top:305px;width:8px;height:22px;background:#3b514d;"></div>
<div class="b" style="left:791.5px;top:261px;width:8px;height:22px;background:#3b514d;"></div>
<div class="b" style="left:655px;top:283px;width:24px;height:22px;background:#514e3a;"></div>
<span class="t m" style="left:446.8px;top:263px;color:#a9b7c6;letter-spacing:0.173px;">    <span style="color:#cc7832">public static void</span> <span style="color:#ffc66d">main</span>(String[] args) <span style="color:#ffef28;font-weight:700">{</span></span>
<span class="t m" style="left:446.8px;top:285px;color:#a9b7c6;letter-spacing:0.173px;">        SpringApplication.<i>run</i>(DemoApplication.<span style="color:#cc7832">class,</span> args)<span style="color:#cc7832">;</span></span>
<span class="t m" style="left:446.8px;top:307px;color:#a9b7c6;letter-spacing:0.172px;">    <span style="color:#ffef28;font-weight:700">}</span></span>
<span class="t m" style="left:446.8px;top:351px;color:#a9b7c6;letter-spacing:0.172px;">}</span>
<div class="b" style="left:477px;top:283px;width:1px;height:22px;background:#404040;"></div>
<svg style="left:393px;top:198px;" width="16" height="16" viewBox="0 0 16 16"><circle cx="8" cy="7.5" r="6.7" fill="#5b9a3f"/><path d="M2.4000000000000004 4.1 L8.6 10.5" stroke="#313335" stroke-width="1.1"/><circle cx="4.6" cy="9.6" r="3.1" fill="#313335" stroke="#b9c4cb" stroke-width="1.3"/><path d="M6.9 12 L9.4 14.6" stroke="#b9c4cb" stroke-width="1.5"/><path d="M9 11.2 L11.6 13.6" stroke="#313335" stroke-width="0.8"/></svg>
<svg style="left:393px;top:219px;" width="16" height="16" viewBox="0 0 16 16"><circle cx="7.6" cy="7.4" r="6.7" fill="#5b9a3f"/><path d="M2.0 4.0 L8.2 10.4" stroke="#313335" stroke-width="1.1"/><circle cx="11" cy="11" r="4.3" fill="#3592c4" stroke="#313335" stroke-width="0.7"/><path d="M12.6 12.2 A2.1 2.1 0 1 1 12.9 10.4 H9.4" fill="none" stroke="#2d4a5a" stroke-width="1.1"/><polygon points="10.6,12 15.8,12 13.2,15.4" fill="#d4d6d8"/></svg>
<svg style="left:414.5px;top:221.5px;" width="10" height="13" viewBox="0 0 10 13"><polygon points="0.5,0.5 0.5,12 9,6.2" fill="#499c54"/></svg>
<svg style="left:404.5px;top:265.5px;" width="10" height="13" viewBox="0 0 10 13"><polygon points="0.5,0.5 0.5,12 9,6.2" fill="#499c54"/></svg>
<svg style="left:437px;top:136px;" width="9" height="9" viewBox="0 0 9 9"><rect x="0.5" y="0.5" width="8" height="8" fill="#2b2b2b" stroke="#5f6164"/><path d="M2.5 4.5 H6.5 M4.5 2.5 V6.5" stroke="#77797b" stroke-width="1"/></svg>
<svg style="left:437px;top:268px;" width="9" height="11" viewBox="0 0 9 11"><path d="M0.5 0.5 H8.5 V6.2 L4.5 10.3 L0.5 6.2 Z" fill="#2b2b2b" stroke="#5f6164"/><path d="M2.5 4 H6.5" stroke="#77797b" stroke-width="1"/></svg>
<svg style="left:437px;top:310px;" width="9" height="11" viewBox="0 0 9 11"><path d="M0.5 10.5 H8.5 V4.8 L4.5 0.7 L0.5 4.8 Z" fill="#2b2b2b" stroke="#5f6164"/><path d="M2.5 7 H6.5" stroke="#77797b" stroke-width="1"/></svg>
<div class="b" style="left:431px;top:261px;width:1px;height:66px;background:#568a80;"></div>
<div class="b" style="left:1407px;top:85px;width:1px;height:2px;background:#4d4d4d;"></div>
<div class="b" style="left:1407px;top:109px;width:1px;height:418px;background:#4d4d4d;"></div>
<div class="b" style="left:1405px;top:307px;width:14px;height:2px;background:#c29b2c;"></div>
<svg style="left:1348.7px;top:91.6px;" width="13" height="12" viewBox="0 0 13 12"><path d="M6.4 0.4 L12.6 11.6 H0.2 Z" fill="#d9a514"/><path d="M6.4 4.4 V8" stroke="#22273a" stroke-width="1.7"/><rect x="5.55" y="8.9" width="1.7" height="1.6" fill="#22273a"/></svg>
<span class="t" style="left:1364px;top:88px;">1</span>
<svg style="left:1382px;top:94.5px;" width="9" height="6" viewBox="0 0 9 6"><path d="M0.5 5.2 L4.5 1 L8.5 5.2" fill="none" stroke="#afb1b3" stroke-width="1.2"/></svg>
<svg style="left:1402.5px;top:94.5px;" width="9" height="6" viewBox="0 0 9 6"><path d="M0.5 0.8 L4.5 5 L8.5 0.8" fill="none" stroke="#afb1b3" stroke-width="1.2"/></svg>
<div class="b" style="left:1419px;top:57px;width:1px;height:750px;background:#323232;"></div>
<svg style="left:1424.7px;top:66.7px;" width="12" height="13" viewBox="0 0 12 13"><path d="M0 2.6 C0 -0.6 11.7 -0.6 11.7 2.6 V9.8 C11.7 13 0 13 0 9.8 Z" fill="#afb1b3"/><path d="M0 3.4 C0.6 6 11.1 6 11.7 3.4 M0 6.5 C0.6 9.1 11.1 9.1 11.7 6.5" fill="none" stroke="#3c3f41" stroke-width="0.9"/><path d="M0 2.6 C0.6 5 11.1 5 11.7 2.6" fill="none" stroke="#3c3f41" stroke-width="0"/></svg>
<span class="t" style="left:1408.5px;top:90px;width:40px;text-align:center;transform:rotate(90deg)"><span class="c" style="letter-spacing:-0.9px">数据库</span></span>
<svg style="left:1424.4px;top:137.4px;" width="13" height="13" viewBox="0 0 13 13"><path d="M6.2 0.6 C3.4 0.6 2.2 2.8 2.2 5.4 V8 L0.4 10.4 H12 L10.2 8 V5.4 C10.2 2.8 9 0.6 6.2 0.6 Z" fill="#afb1b3"/><path d="M4.6 11.4 H7.8 V12.6 H4.6 Z" fill="#afb1b3"/><circle cx="10" cy="2.4" r="2.7" fill="#db5860" stroke="#3c3f41" stroke-width="0.7"/></svg>
<span class="t" style="left:1408.3px;top:155px;width:40px;text-align:center;transform:rotate(90deg)"><span class="c" style="letter-spacing:-0.7px">通知</span></span>
<span class="t" style="left:1422.8px;top:190.6px;font-size:17px;font-weight:700;font-style:italic;color:#afb1b3;-webkit-text-stroke:0.4px #afb1b3">m</span>
<span class="t" style="left:1408.2px;top:220px;width:40px;text-align:center;transform:rotate(90deg);font-size:12px">Maven</span>
<div class="b" style="left:22px;top:526px;width:1397px;height:1px;background:#323232;"></div>
<div class="b" style="left:22px;top:527px;width:1397px;height:26px;background:#3b4754;"></div>
<span class="t" style="left:28px;top:531.2px;letter-spacing:-0.214px;"><span class="c">构建</span>:</span>
<span class="t" style="left:74.5px;top:531.2px;letter-spacing:-0.008px;"><span class="c">同步</span></span>
<svg style="left:105px;top:537px;" width="8" height="8" viewBox="0 0 8 8"><path d="M0.5 0.5 L7.5 7.5 M7.5 0.5 L0.5 7.5" stroke="#6e7478" stroke-width="1.1"/></svg>
<span class="t" style="left:136px;top:531.2px;color:#c8cacc;letter-spacing:-0.004px;"><span class="c">构建输出</span></span>
<svg style="left:191px;top:537px;" width="8" height="8" viewBox="0 0 8 8"><path d="M0.5 0.5 L7.5 7.5 M7.5 0.5 L0.5 7.5" stroke="#6e7478" stroke-width="1.1"/></svg>
<div class="b" style="left:22px;top:553px;width:1397px;height:1px;background:#323232;"></div>
<div class="b" style="left:124px;top:551px;width:86px;height:3px;background:#4a88c7;border-radius:1.5px"></div>
<svg style="left:1373px;top:533px;" width="14" height="14" viewBox="0 0 14 14"><g transform="translate(7,7)"><circle r="3.5" fill="none" stroke="#afb1b3" stroke-width="3"/><rect x="-1.7" y="-6.4" width="3.4" height="3.2" rx="0.5" transform="rotate(0)" fill="#afb1b3"/><rect x="-1.7" y="-6.4" width="3.4" height="3.2" rx="0.5" transform="rotate(60)" fill="#afb1b3"/><rect x="-1.7" y="-6.4" width="3.4" height="3.2" rx="0.5" transform="rotate(120)" fill="#afb1b3"/><rect x="-1.7" y="-6.4" width="3.4" height="3.2" rx="0.5" transform="rotate(180)" fill="#afb1b3"/><rect x="-1.7" y="-6.4" width="3.4" height="3.2" rx="0.5" transform="rotate(240)" fill="#afb1b3"/><rect x="-1.7" y="-6.4" width="3.4" height="3.2" rx="0.5" transform="rotate(300)" fill="#afb1b3"/></g></svg>
<div class="b" style="left:1400px;top:539px;width:12px;height:2px;background:#afb1b3;"></div>
<div class="b" style="left:50px;top:554px;width:1px;height:253px;background:#323232;"></div>
<svg style="left:28px;top:560.8px;" width="16" height="16" viewBox="0 0 16 16"><g fill="#499c54"><polygon points="0,6.3 7.8,0.9 9.5,3.3 1.8,8.7"/><polygon points="4.1,6.2 6.5,3.8 15.1,12.3 12.6,14.8"/></g></svg>
<div class="b" style="left:31px;top:590px;width:10px;height:10px;background:#626466;"></div>
<div class="b" style="left:26px;top:611px;width:20px;height:1px;background:#555759;"></div>
<svg style="left:28.5px;top:620.5px;" width="15" height="15" viewBox="0 0 15 15"><g transform="translate(0,-1.1) scale(1.02,1.08)"><path d="M13.6 3.6 L11 6.2 L8.9 4.1 L11.5 1.5 C9.9 0.9 8 1.2 6.8 2.5 C5.5 3.8 5.3 5.6 5.9 7.1 L0.6 12.4 L2.7 14.5 L8 9.2 C9.5 9.8 11.4 9.6 12.6 8.3 C13.9 7.1 14.2 5.2 13.6 3.6 Z" fill="#afb1b3"/></g></svg>
<div class="b" style="left:26px;top:644px;width:20px;height:1px;background:#555759;"></div>
<svg style="left:28.5px;top:654px;" width="15" height="15" viewBox="0 0 15 15"><g transform="translate(-0.5,-1) scale(1.04,1.04)"><path d="M8.8 0.6 L14.4 6.2 L13 7 L12 6.6 L9.8 8.8 L10 11.4 L8.8 12.6 L5.6 9.4 L0.5 14.5 L0.5 14 L5.1 8.9 L2.4 6.2 L3.6 5 L6.2 5.2 L8.4 3 L8 2 Z" fill="#afb1b3"/></g></svg>
<svg style="left:28.6px;top:682px;" width="17" height="16" viewBox="0 0 17 16"><path d="M0.2 5.6 C2.2 2 4.8 0.4 7.4 0.4 C10 0.4 12.6 2 14.6 5.6 C12.6 9.2 10 10.6 7.4 10.6 C4.8 10.6 2.2 9.2 0.2 5.6 Z" fill="#afb1b3"/><circle cx="7.4" cy="5.5" r="3.7" fill="#3c3f41"/><circle cx="7.4" cy="5.5" r="2.1" fill="#afb1b3"/><polygon points="10,10.9 16.6,10.9 13.3,14.3" fill="#afb1b3" stroke="#3c3f41" stroke-width="0.6"/></svg>
<div class="b" style="left:51px;top:574px;width:211px;height:20px;background:#4b6eaf;"></div>
<svg style="left:58.0px;top:560.4px;" width="10" height="6" viewBox="0 0 10 6"><path d="M0.4 0.6 L4.9 4.9 L9.4 0.6" fill="none" stroke="#afb1b3" stroke-width="1.2"/></svg>
<svg style="left:76px;top:557px;" width="14" height="14" viewBox="0 0 14 14"><circle cx="7" cy="7" r="6.5" fill="#c75450"/><path d="M7 3 V8" stroke="#3c3f41" stroke-width="2"/><rect x="6" y="9.4" width="2" height="2" fill="#3c3f41"/></svg>
<span class="t" style="left:94.5px;top:554.2px;font-weight:700;letter-spacing:-0.300px;">demo:</span>
<span class="t" style="left:136.5px;top:554.2px;letter-spacing:-0.131px;"><span class="c">构建</span> <span class="c">失败</span></span>
<span class="t" style="left:192px;top:554.2px;color:#808284;font-size:12px;letter-spacing:-0.172px;"><span class="c11">在</span> 4<span class="c11">秒</span>25<span class="c11">毫秒</span></span>
<svg style="left:94px;top:577px;" width="14" height="14" viewBox="0 0 14 14"><circle cx="7" cy="7" r="6.5" fill="#c75450"/><path d="M7 3 V8" stroke="#3c3f41" stroke-width="2"/><rect x="6" y="9.4" width="2" height="2" fill="#3c3f41"/></svg>
<span class="t" style="left:112.5px;top:574.5px;color:#c6c8ca;letter-spacing:-0.124px;"><span class="c">错误</span>: <span class="c">无效的源发行版：</span>17</span>
<div class="b" style="left:52px;top:797px;width:129px;height:8px;background:#595b5d;"></div>
<div class="b" style="left:262px;top:554px;width:1px;height:253px;background:#323232;"></div>
<div class="b" style="left:263px;top:554px;width:1127px;height:253px;background:#2b2b2b;"></div>
<span class="t m" style="left:274px;top:555px;color:#ff6b68;letter-spacing:0.084px;">java: <span class="c"><span class="c">错误</span></span>: <span class="c"><span class="c">无效的源发行版：</span></span>17</span>
<div class="b" style="left:1390px;top:554px;width:1px;height:253px;background:#323232;"></div>
<div class="b" style="left:1391px;top:554px;width:28px;height:253px;background:#3c3f41;"></div>
<svg style="left:1398.7px;top:562.8px;" width="14" height="15" viewBox="0 0 14 15"><path d="M0.3 1.1 H12.3" stroke="#afb1b3" stroke-width="1.9"/><path d="M0.3 6 H10.2 C13.6 6 13.6 11.1 10.2 11.1 H8" fill="none" stroke="#afb1b3" stroke-width="1.7"/><path d="M0.3 11.1 H3.3" stroke="#afb1b3" stroke-width="1.9"/><polygon points="8.8,8.2 8.8,14.2 5.2,11.2" fill="#afb1b3"/></svg>
<div class="b" style="left:1394px;top:584px;width:22px;height:22px;border-radius:3px;background:#5c6164"></div>
<svg style="left:1398.7px;top:586.6px;" width="14" height="15" viewBox="0 0 14 15"><path d="M0.3 12.6 H12.3" stroke="#afb1b3" stroke-width="1.9"/><path d="M0.3 4.6 H4 M0.3 8.6 H4" stroke="#afb1b3" stroke-width="1.9"/><path d="M9.3 1.5 V8" stroke="#afb1b3" stroke-width="1.7"/><polygon points="5.8,6.6 12.8,6.6 9.3,10.6" fill="#afb1b3"/></svg>
<div class="b" style="left:0px;top:806px;width:1440px;height:1px;background:#323232;"></div>
<div class="b" style="left:608px;top:807px;width:57px;height:10px;background:#2d2f30;"></div>
<span class="t" style="left:50.5px;top:809.5px;font-size:12px;letter-spacing:-0.170px;">Version Control</span>
<span class="t" style="left:171.2px;top:809.5px;font-size:12px;"><span class="c">运行</span></span>
<span class="t" style="left:228.5px;top:809.5px;font-size:12px;letter-spacing:0.498px;">Profiler</span>
<span class="t" style="left:302.3px;top:809.5px;font-size:12px;letter-spacing:-0.988px;">TODO</span>
<span class="t" style="left:371.5px;top:809.5px;font-size:12px;"><span class="c">问题</span></span>
<span class="t" style="left:428.5px;top:809.5px;font-size:12px;"><span class="c">终端</span></span>
<span class="t" style="left:489.5px;top:809.5px;font-size:12px;letter-spacing:-0.193px;">LuaCheck</span>
<span class="t" style="left:577.3px;top:809.5px;font-size:12px;"><span class="c">服务</span></span>
<span class="t" style="left:634.2px;top:809.5px;color:#ffffff;font-size:12px;"><span class="c">构建</span></span>
<span class="t" style="left:692.5px;top:809.5px;font-size:12px;"><span class="c">依赖</span></span>
<span class="t" style="left:750.5px;top:809.5px;font-size:12px;letter-spacing:0.302px;">Spring</span>
<svg style="left:36px;top:812px;" width="9" height="6" viewBox="0 0 9 6"><circle cx="2" cy="2.2" r="1.5" fill="#afb1b3"/><circle cx="7" cy="4" r="1.4" fill="#afb1b3"/><path d="M2 3 V6" stroke="#afb1b3" stroke-width="1.2"/></svg>
<svg style="left:155.5px;top:813px;" width="8" height="5" viewBox="0 0 8 5"><polygon points="0,0 0,6 7,5" fill="#afb1b3"/></svg>
<svg style="left:212.5px;top:812.5px;" width="10" height="6" viewBox="0 0 10 6"><circle cx="5" cy="6" r="4.6" fill="none" stroke="#afb1b3" stroke-width="1.3"/></svg>
<svg style="left:287.5px;top:814px;" width="10" height="4" viewBox="0 0 10 4"><path d="M0 0.8 H2 M3.5 0.8 H10" stroke="#afb1b3" stroke-width="1.5"/></svg>
<svg style="left:356px;top:812.5px;" width="10" height="6" viewBox="0 0 10 6"><circle cx="5" cy="6" r="5" fill="#afb1b3"/></svg>
<svg style="left:411px;top:813.5px;" width="12" height="5" viewBox="0 0 12 5"><rect x="0" y="0" width="11" height="6" fill="#afb1b3"/></svg>
<svg style="left:469px;top:811px;" width="16" height="7" viewBox="0 0 16 7"><circle cx="7" cy="9" r="6.4" fill="#d5504a"/><circle cx="8.6" cy="7.6" r="3" fill="#f2f2f2"/><path d="M11 4.4 L14.6 1" stroke="#3592c4" stroke-width="2"/><circle cx="14.2" cy="1.4" r="1.5" fill="#e8c44a"/></svg>
<svg style="left:561px;top:813px;" width="12" height="5" viewBox="0 0 12 5"><polygon points="1,5 5.5,0.4 10,5" fill="#afb1b3"/></svg>
<svg style="left:615px;top:812px;" width="10" height="6" viewBox="0 0 10 6"><polygon points="0,5 5.5,0.5 7.5,2.5 3,6" fill="#afb1b3"/></svg>
<svg style="left:676px;top:813px;" width="12" height="5" viewBox="0 0 12 5"><polygon points="0,5 6,0.4 12,5" fill="#afb1b3"/></svg>
<svg style="left:734px;top:813px;" width="10" height="5" viewBox="0 0 10 5"><polygon points="0,5 9.5,0 9.5,5" fill="#afb1b3"/></svg>
</body>
</html>
